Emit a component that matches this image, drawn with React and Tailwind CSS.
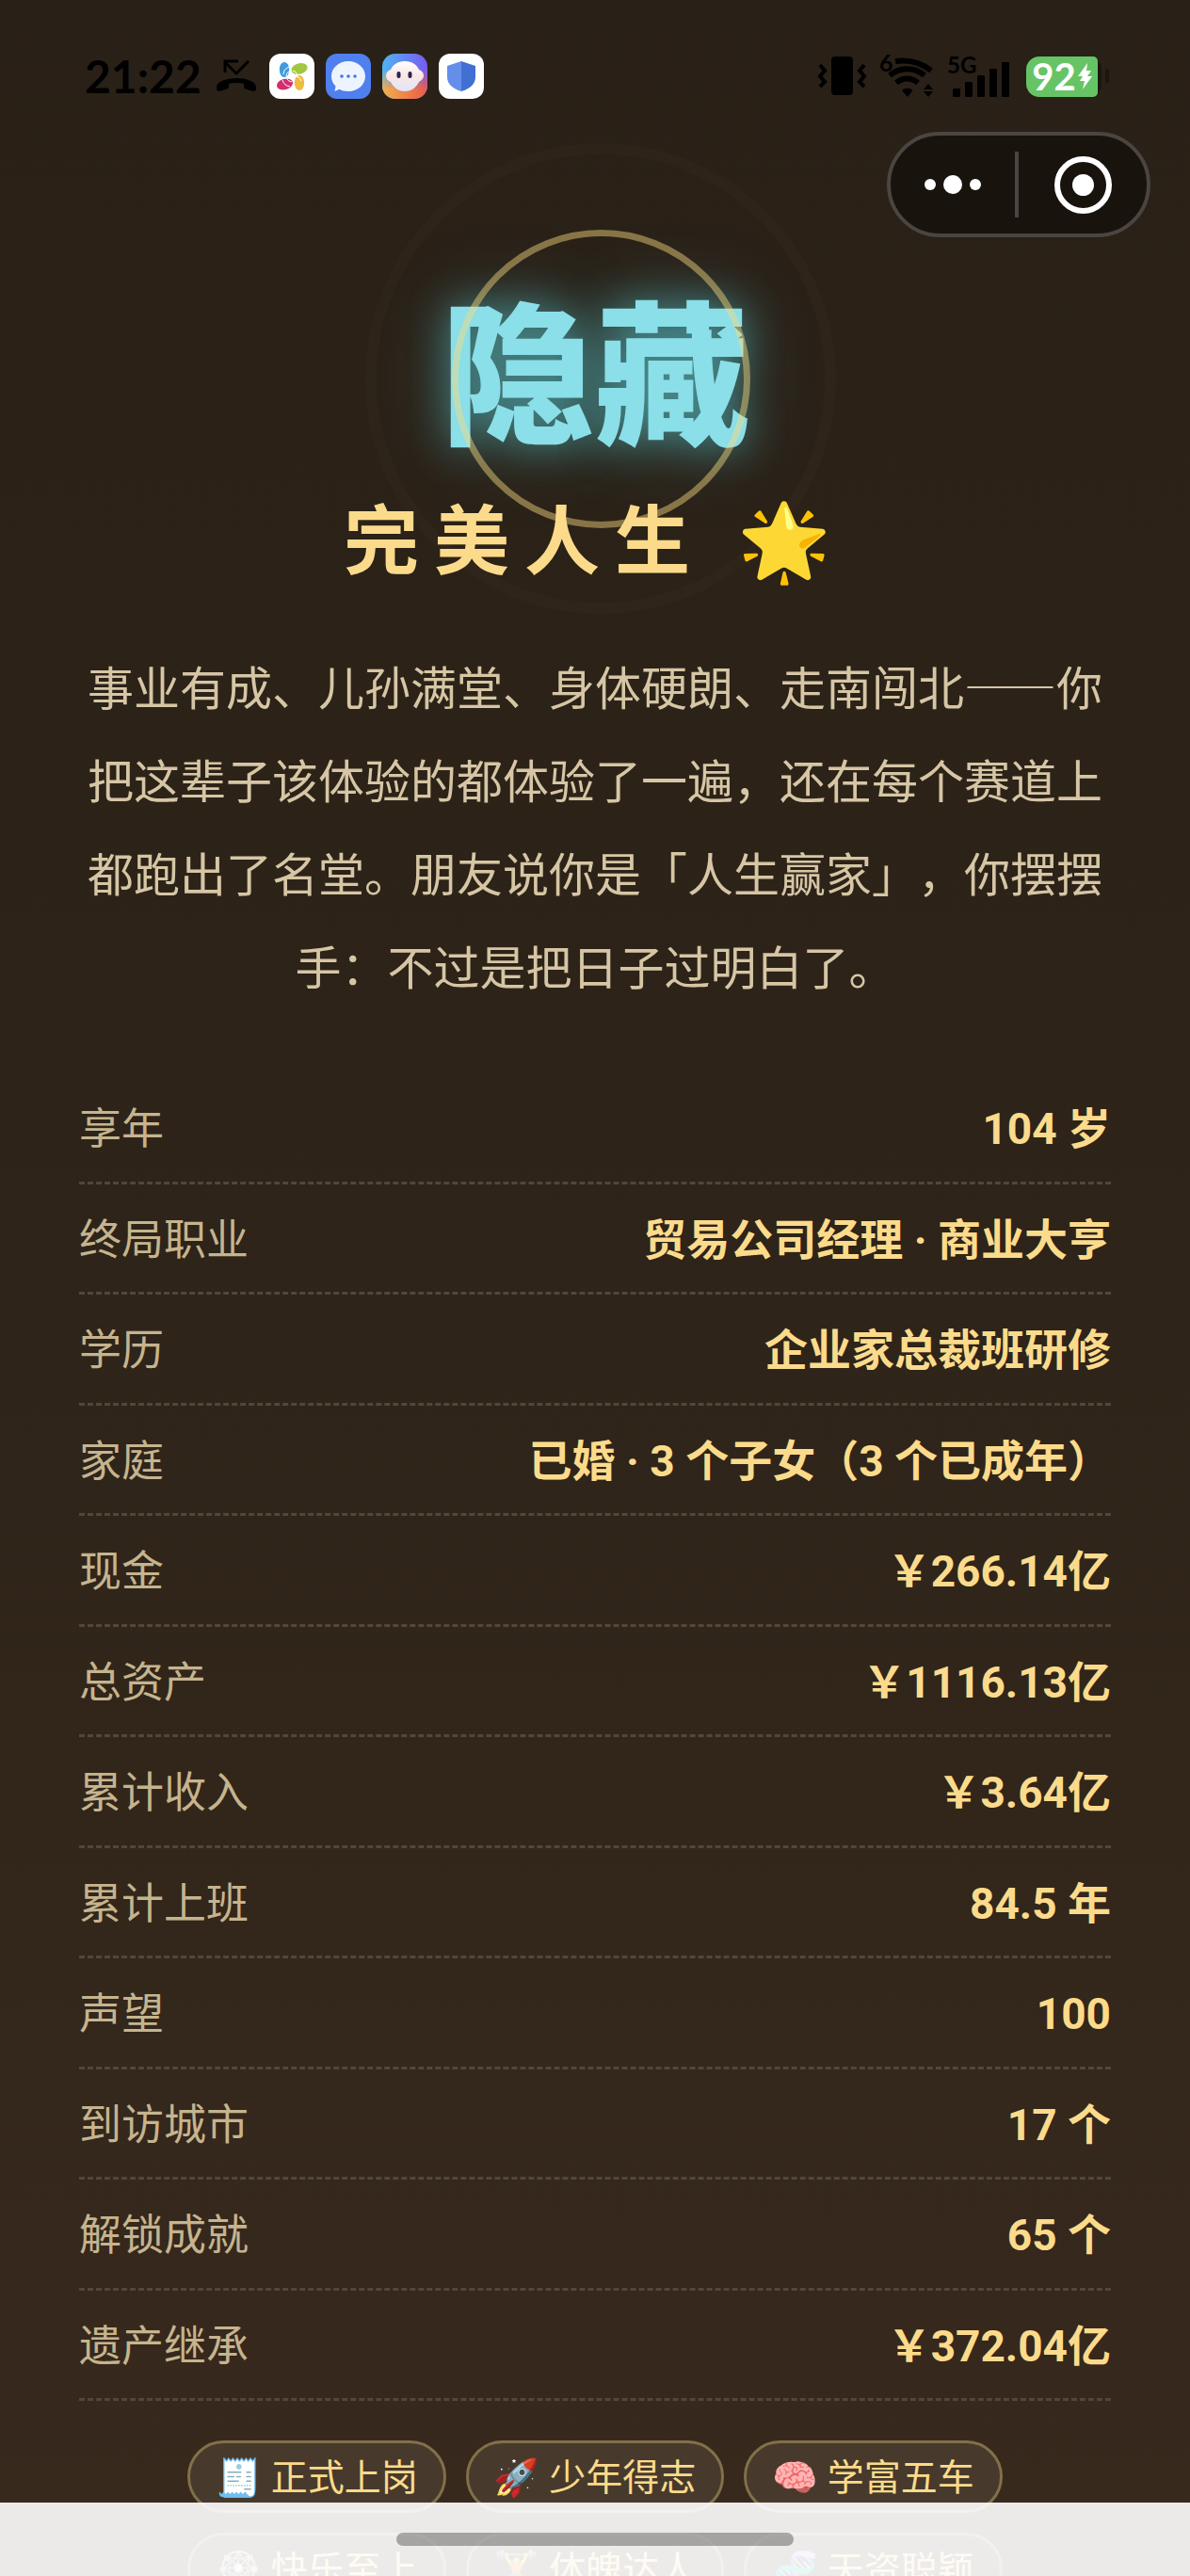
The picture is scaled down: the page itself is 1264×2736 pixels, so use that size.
const stats = [
    { label: "享年", value: "104 岁" },
    { label: "终局职业", value: "贸易公司经理 · 商业大亨" },
    { label: "学历", value: "企业家总裁班研修" },
    { label: "家庭", value: "已婚 · 3 个子女（3 个已成年）" },
    { label: "现金", value: "￥266.14亿" },
    { label: "总资产", value: "￥1116.13亿" },
    { label: "累计收入", value: "￥3.64亿" },
    { label: "累计上班", value: "84.5 年" },
    { label: "声望", value: "100" },
    { label: "到访城市", value: "17 个" },
    { label: "解锁成就", value: "65 个" },
    { label: "遗产继承", value: "￥372.04亿" }
];

const badges = [
    { icon: "🧾", name: "正式上岗" },
    { icon: "🚀", name: "少年得志" },
    { icon: "🧠", name: "学富五车" },
    { icon: "🎡", name: "快乐至上" },
    { icon: "🏋️", name: "体魄达人" },
    { icon: "🧬", name: "天资聪颖" }
];

const MissedCallIcon = () => (
    <svg width="42" height="36" viewBox="0 0 42 36" aria-hidden="true">
        <path d="M9 14V2h14M9 3l12 12L34 2" fill="none" stroke="#000" strokeWidth="3" />
        <path d="M0 30c0-4 3-6 7-7.500C11 21 16 20 21 20s10 1 14 2.500c4 1.500 7 3.500 7 7.500 0 3-1 4.500-3 4l-8-2.500c-2-.5-2-1.500-2-3V26c-5-1.500-11-1.500-16 0v2.500c0 1.500 0 2.500-2 3L3 34c-2 .5-3-1-3-4z" />
    </svg>
);

const PetalsIcon = () => (
    <svg width="48" height="48" viewBox="0 0 48 48" aria-hidden="true">
        <rect width="48" height="48" rx="12" fill="#fff" />
        <ellipse cx="16" cy="17" rx="5.200" ry="8" fill="#3f9be0" />
        <ellipse cx="32" cy="16" rx="8.800" ry="5.600" transform="rotate(-15 32 16)" fill="#a2c83f" />
        <ellipse cx="16.500" cy="32.500" rx="8.800" ry="5.600" transform="rotate(-15 16.500 32.500)" fill="#d0306f" />
        <ellipse cx="32" cy="31" rx="5.200" ry="8" fill="#f0bb3f" />
        <g fill="none" stroke="#fff">
            <path d="M15 22a8 8 0 0 1 8-8M18 24a6 6 0 0 1 6-6M24 30a8 8 0 0 1-6-4M22 35a10 10 0 0 1-8-7M26 24a7 7 0 0 1 8 5M25 18a8 8 0 0 1 5 4" />
        </g>
    </svg>
);

const ChatIcon = () => (
    <svg width="48" height="48" viewBox="0 0 48 48" aria-hidden="true">
        <rect width="48" height="48" rx="12" fill="#4f80ee" />
        <path d="M24 8c10 0 18 7 18 16s-8 16-18 16c-3.500 0-7-.8-9.500-2.200L9.500 40l1-5.500C7.500 31.500 6 28 6 24 6 15 14 8 24 8z" fill="#eef4ff" />
        <g fill="#4576e0">
            <circle cx="17" cy="24" r="1.800" />
            <circle cx="24" cy="24" r="1.800" />
            <circle cx="31" cy="24" r="1.800" />
        </g>
    </svg>
);

const MascotIcon = () => (
    <svg width="48" height="48" viewBox="0 0 48 48" aria-hidden="true">
        <defs>
            <linearGradient id="mascot-sky" x1="0" y1="0" x2="1" y2="0">
                <stop offset="0" stopColor="#4fb4f2" />
                <stop offset="1" stopColor="#7a5af0" />
            </linearGradient>
            <linearGradient id="mascot-warm" x1="0" y1="0" x2="1" y2="0">
                <stop offset="0" stopColor="#f3b04e" />
                <stop offset="1" stopColor="#e85a4a" />
            </linearGradient>
            <linearGradient id="mascot-fade" x1="0" y1="0" x2="0" y2="1">
                <stop offset="0.35" stopColor="#fff" stopOpacity="0" />
                <stop offset="0.8" stopColor="#fff" />
            </linearGradient>
            <mask id="mascot-mask">
                <rect width="48" height="48" fill="url(#mascot-fade)" />
            </mask>
            <linearGradient id="mascot-face" x1="0" y1="0" x2="0" y2="1">
                <stop offset="0" stopColor="#fff" />
                <stop offset="0.5" stopColor="#fbe6e4" />
                <stop offset="1" stopColor="#dde6fb" />
            </linearGradient>
        </defs>
        <rect width="48" height="48" rx="14" fill="url(#mascot-sky)" />
        <rect width="48" height="48" rx="14" fill="url(#mascot-warm)" mask="url(#mascot-mask)" />
        <path d="M24 8c8 0 13 4 15 9 3 1 5 3.500 5 6.500S41 29 39 30c-3 6-8 10-15 10S12 36 9 30c-3-1-5-3.500-5-6.500S6 18 9 17c2-5 7-9 15-9z" fill="url(#mascot-face)" />
        <rect x="15.500" y="19" width="4" height="7" rx="2" fill="#2a2352" />
        <rect x="27.500" y="19" width="4" height="7" rx="2" fill="#2a2352" />
    </svg>
);

const ShieldIcon = () => (
    <svg width="48" height="48" viewBox="0 0 48 48" aria-hidden="true">
        <rect width="48" height="48" rx="12" fill="#fff" />
        <path d="M24 8 9 13v12c0 7 6 12.500 15 15z" fill="#658eea" />
        <path d="m24 8 15 5v12c0 7-6 12.500-15 15z" fill="#416fd2" />
    </svg>
);

const VibrateIcon = () => (
    <svg width="54" height="42" viewBox="0 0 54 42" aria-hidden="true">
        <rect x="15" width="23" height="41" rx="4" />
        <path d="m3 9 5 6-5 6 5 6-5 5M50 9l-5 6 5 6-5 6 5 5" fill="none" stroke="#000" strokeWidth="4" />
    </svg>
);

const WifiIcon = () => (
    <svg width="60" height="64" viewBox="0 -8 60 64" aria-hidden="true">
        <g fill="none" stroke="#000" strokeWidth="6">
            <path d="M17 8C31 6 44 9 55 18" />
            <path d="M11 23c11-9 26-9 37 0" />
            <path d="M18 31c7-6 16-6 23 0" />
        </g>
        <path d="M24 39c3.500-3 8-3 11.500 0L30 46z" />
        <path d="m47 38 5-6 5 6zM47 40l5 6 5-6z" />
        <text x="0" y="19" fontSize="25" fontWeight="700">6</text>
    </svg>
);

const SignalIcon = () => (
    <svg width="66" height="62" viewBox="0 -8 66 62" aria-hidden="true">
        <rect x="6" y="36" width="8" height="9" rx="1" />
        <rect x="19" y="29" width="8" height="16" rx="1" />
        <rect x="32" y="22" width="8" height="23" rx="1" />
        <rect x="45" y="15" width="8" height="30" rx="1" />
        <rect x="58" y="8" width="8" height="37" rx="1" />
        <text x="0" y="20" fontSize="24" fontWeight="700">5G</text>
    </svg>
);

const Battery = () => (
    <div className="flex items-center gap-1">
        <div className="flex h-[43px] w-20 rounded-[14px] bg-[#1c160f]">
            <div className="flex w-[76px] items-center justify-center gap-0.5 rounded-l-[14px] rounded-r-[5px] bg-[#66c466]">
                <span className="text-[40px] leading-none font-bold text-white">92</span>
                <svg width="15" height="28" viewBox="0 0 15 28" aria-hidden="true">
                    <path d="M10 0 0 14h5l-3 5h5l-2 9 10-14h-5l4-6H9z" fill="#fff" />
                </svg>
            </div>
        </div>
        <div className="h-4 w-1 rounded-r-full bg-[#1c160f]" />
    </div>
);

const StatusBar = () => (
    <header className="flex h-35 items-center justify-between pt-[22px] pr-[86px] pl-[90px] font-['Lato','Noto_Sans_CJK_SC',sans-serif] text-black">
        <div className="flex items-center gap-3">
            <span className="pr-1 text-[48px] leading-none font-bold">21:22</span>
            <MissedCallIcon />
            <div className="flex gap-3 pl-0.5">
                <PetalsIcon />
                <ChatIcon />
                <MascotIcon />
                <ShieldIcon />
            </div>
        </div>
        <div className="flex items-center gap-3">
            <VibrateIcon />
            <WifiIcon />
            <SignalIcon />
            <div className="pl-1.5">
                <Battery />
            </div>
        </div>
    </header>
);

const MenuCapsule = () => (
    <div className="flex justify-end px-[42px]">
        <div className="flex h-28 w-[280px] items-center rounded-full border-4 border-[#4a4540] bg-[#19130e]">
            <button type="button" aria-label="更多" className="flex w-[132px] items-center justify-center gap-2">
                <i className="size-3 rounded-full bg-white" />
                <i className="size-5 rounded-full bg-white" />
                <i className="size-3 rounded-full bg-white" />
            </button>
            <div className="h-[70px] w-1 bg-[#4a4540]" />
            <button type="button" aria-label="关闭" className="flex flex-1 items-center justify-center">
                <span className="flex size-[61px] items-center justify-center rounded-full border-6 border-white">
                    <i className="size-[23px] rounded-full bg-white" />
                </span>
            </button>
        </div>
    </div>
);

const Hero = () => (
    <section className="text-center">
        <div className="relative pt-12">
            <h1 className="text-[164px] leading-[176px] font-black text-[#8adfe8] [text-shadow:0_0_42px_rgba(94,220,232,0.5),0_0_84px_rgba(94,220,232,0.3)]">
                隐藏
            </h1>
            {/* ripple rings */}
            <div className="pointer-events-none absolute inset-x-0 top-[150px] flex h-0 items-center justify-center pl-3">
                <div className="size-[317px] shrink-0 rounded-full border-7 border-[#fbdb80]/45" />
            </div>
            <div className="pointer-events-none absolute inset-x-0 top-[150px] flex h-0 items-center justify-center pl-3">
                <div className="size-[500px] shrink-0 rounded-full border-12 border-[#fbdb80]/2" />
            </div>
        </div>
        <h2 className="relative pt-9 text-[80px] leading-[112px] font-bold tracking-[16px] text-[#fbdb8b]">
            完美人生 🌟
        </h2>
        <p className="pt-[54px] text-[49px] leading-[99px] text-[#d6c6a5]">
            事业有成、儿孙满堂、身体硬朗、走南闯北——你把这辈子该体验的都体验了一遍，还在每个赛道上都跑出了名堂。朋友说你是「人生赢家」，你摆摆手：不过是把日子过明白了。
        </p>
    </section>
);

const StatList = () => (
    <dl className="pt-[66px]">
        {stats.map((item) => (
            <div
                key={item.label}
                className="flex items-baseline justify-between border-b-3 border-dashed border-[#51473a] pt-[22px] pb-[25px] text-[45px] leading-normal"
            >
                <dt className="text-[#c5b48e]">{item.label}</dt>
                <dd className="font-['Roboto','Noto_Sans_CJK_SC',sans-serif] text-[46px] leading-none font-bold text-[#fbdb8b]">
                    {item.value}
                </dd>
            </div>
        ))}
    </dl>
);

const BadgeList = () => (
    <ul className="mx-auto grid w-fit grid-cols-3 gap-[21px] pt-[42px]">
        {badges.map((badge) => (
            <li
                key={badge.name}
                className="flex items-center justify-center gap-2.5 rounded-full border-3 border-[#827049] bg-[#473a2c] px-[27px] pt-1 pb-2 text-[39px] leading-[59px] whitespace-nowrap text-[#fbdb8b]"
            >
                <span>{badge.icon}</span>
                <span>{badge.name}</span>
            </li>
        ))}
    </ul>
);

const App = () => {
    return (
        <div
            lang="zh-CN"
            className="relative h-screen overflow-hidden bg-linear-to-b from-[#292017] via-[#2e2419] to-[#38291d] font-['Noto_Sans_CJK_SC','Noto_Color_Emoji',sans-serif] [text-spacing-trim:space-all]"
        >
            <StatusBar />
            <MenuCapsule />
            <main className="px-[84px]">
                <Hero />
                <StatList />
                <BadgeList />
            </main>
            {/* system navigation area over the scrolled content */}
            <div className="absolute inset-x-0 bottom-0 flex h-[78px] justify-center bg-white/90 pt-8">
                <div className="h-3.5 w-1/3 rounded-full bg-black/30" />
            </div>
        </div>
    );
};

export default App;
